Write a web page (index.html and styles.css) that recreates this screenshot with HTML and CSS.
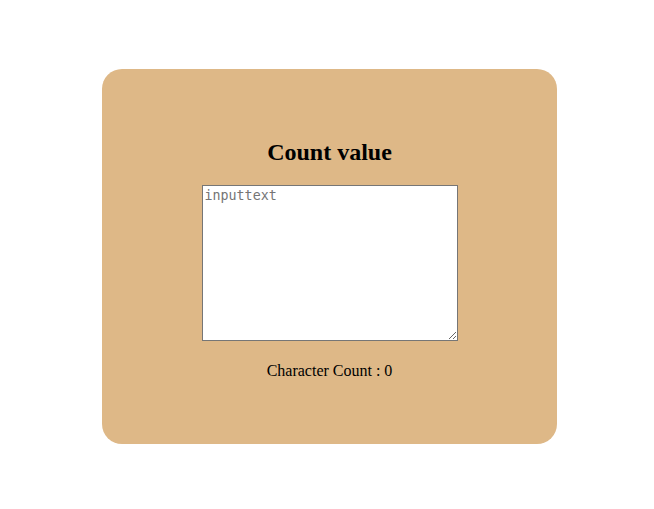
FILE: index.html
```html
<!DOCTYPE html>
<html>
<head>
<meta charset="utf-8">
<link rel="stylesheet" href="styles.css">
</head>
<body>
<div class="page">
  <div class="card">
    <h2 class="title">Count value</h2>
    <textarea class="input" placeholder="inputtext"></textarea>
    <p class="count">Character Count : 0</p>
  </div>
</div>
</body>
</html>
```
FILE: styles.css
```css
html, body {
  margin: 0;
  padding: 0;
  background: #ffffff;
}
.page {
  padding: 69px 0 0 102px;
}
.card {
  box-sizing: border-box;
  width: 455px;
  height: 375px;
  background: #deb887;
  border-radius: 20px;
  display: flex;
  flex-direction: column;
  align-items: center;
  padding-top: 49px;
  font-family: "Liberation Serif", serif;
  color: #000;
}
.title {
  font-size: 24px;
  font-weight: bold;
  margin: 21px 0 19px 0;
  line-height: 27px;
}
.input {
  box-sizing: border-box;
  width: 256px;
  height: 156px;
  margin: 0;
  padding: 2px;
  border: 1px solid #767676;
  font-family: "DejaVu Sans Mono", monospace;
  font-size: 13.333px;
  background: #fff;
}
.input::placeholder {
  color: #757575;
}
.count {
  font-size: 16px;
  margin: 21px 0 0 0;
  line-height: 18px;
}
```
